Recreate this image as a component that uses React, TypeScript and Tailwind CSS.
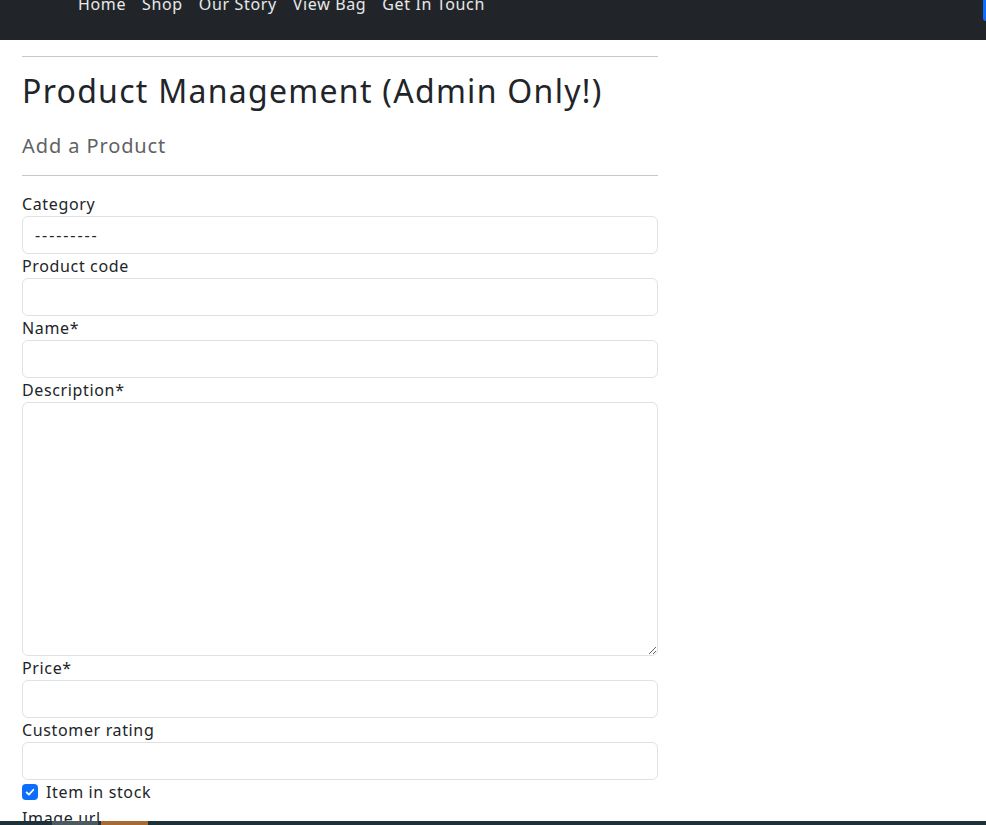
import React from 'react'

const navLinks = ['Home', 'Shop', 'Our Story', 'View Bag', 'Get In Touch']

function Field({ label, tall }: { label: string; tall?: boolean }) {
  return (
    <div className="flex flex-col">
      <label className="h-6 text-[16px] leading-6 tracking-[0.04em] text-[#212529]">{label}</label>
      {tall ? (
        <textarea className="h-[254px] w-full rounded-[6px] border border-[#dee2e6] bg-white px-3 py-1.5 outline-none" />
      ) : (
        <input className="h-[38px] w-full rounded-[6px] border border-[#dee2e6] bg-white px-3 outline-none" />
      )}
    </div>
  )
}

export default function App() {
  return (
    <div
      className="flex h-[825px] flex-col overflow-hidden bg-white text-[#212529]"
      style={{ fontFamily: '"Noto Sans", sans-serif' }}
    >
      {/* navbar (scrolled, only the bottom part is visible) */}
      <header className="flex h-10 shrink-0 justify-between overflow-hidden bg-[#212529]">
        <nav className="-mt-[8px] flex h-6 pl-[70px]">
          {navLinks.map((l) => (
            <a key={l} className="px-2 text-[16px] leading-6 tracking-[0.04em] text-white/90">
              {l}
            </a>
          ))}
        </nav>
        <div className="h-[21px] w-[3px] rounded-bl-[4px] bg-[#0d6efd]" />
      </header>

      <main className="flex-1 overflow-hidden px-[22px] pt-4">
        <div className="w-[636px]">
          <hr className="border-t border-[#c8c9ca]" />
          <h2 className="mt-4 text-[32px] leading-9 tracking-[0.04em] text-[#212529]">
            Product Management (Admin Only!)
          </h2>
          <h5 className="mt-[25px] text-[20px] leading-6 tracking-[0.045em] text-[#5f6265]">Add a Product</h5>
          <hr className="mt-[17px] border-t border-[#c8c9ca]" />

          <form className="mt-4 flex flex-col">
            <div className="flex flex-col">
              <label className="h-6 text-[16px] leading-6 tracking-[0.04em]">Category</label>
              <div className="flex h-[38px] items-center rounded-[6px] border border-[#dee2e6] px-3 text-[16px] tracking-[0.12em]">
                ---------
              </div>
            </div>
            <Field label="Product code" />
            <Field label="Name*" />
            <Field label="Description*" tall />
            <Field label="Price*" />
            <Field label="Customer rating" />
            <div className="mb-0.5 flex h-6 items-center gap-2">
              <span className="flex h-4 w-4 items-center justify-center rounded-[4px] bg-[#0d6efd]">
                <svg viewBox="0 0 16 16" className="h-3 w-3" fill="none" stroke="white" strokeWidth="2.4" strokeLinecap="round" strokeLinejoin="round">
                  <path d="M3.5 8.5l3 3 6-6.5" />
                </svg>
              </span>
              <span className="text-[16px] leading-6 tracking-[0.04em]">Item in stock</span>
            </div>
            <label className="h-6 text-[16px] leading-6 tracking-[0.04em]">Image url</label>
          </form>
        </div>
      </main>

      {/* bottom strip */}
      <div className="flex h-1 shrink-0 bg-[#1e3139]">
        <div className="ml-[52px] w-[46px] bg-[#4c5a60]" />
        <div className="ml-[3px] w-[47px] bg-[#a9692f]" />
      </div>
    </div>
  )
}
